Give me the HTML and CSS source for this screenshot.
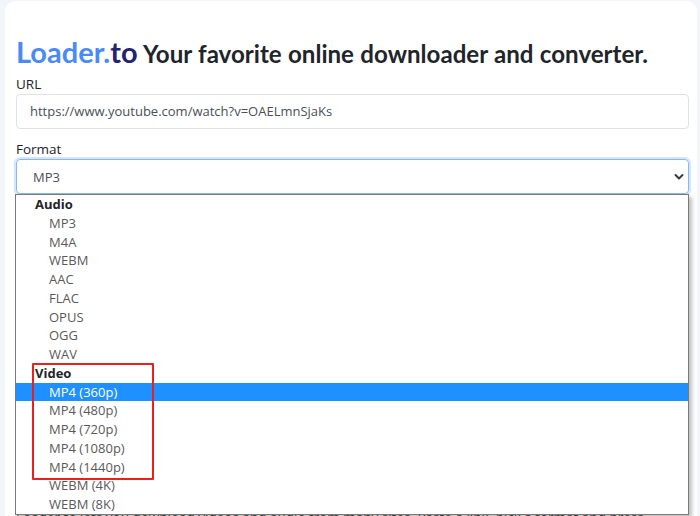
FILE: index.html
```html
<!DOCTYPE html>
<html lang="en">
<head>
    <meta charset="UTF-8">
    <meta name="viewport" content="width=device-width, initial-scale=1.0">
    <title>Loader.to - Online downloader and converter</title>
    <link rel="stylesheet" href="styles.css">
</head>
<body>
    <main class="card">
        <h1 class="title"><span class="brand">Loader.</span><span class="brand-to">to</span> Your favorite online downloader and converter.</h1>

        <label class="field-label">URL</label>
        <div class="text-input">https://www.youtube.com/watch?v=OAELmnSjaKs</div>

        <label class="field-label">Format</label>
        <div class="select-wrap">
            <div class="select focused">
                <span>MP3</span>
                <svg class="chevron" width="10" height="10" viewBox="0 0 10 10"><path d="M1.5 3 L5 6.5 L8.5 3" fill="none" stroke="#343a40" stroke-width="2" stroke-linecap="round" stroke-linejoin="round"/></svg>
            </div>
            <!-- open option list -->
            <ul class="options">
                <li class="group">Audio</li>
                <li>MP3</li>
                <li>M4A</li>
                <li>WEBM</li>
                <li>AAC</li>
                <li>FLAC</li>
                <li>OPUS</li>
                <li>OGG</li>
                <li>WAV</li>
                <li class="group">Video</li>
                <li class="active">MP4 (360p)</li>
                <li>MP4 (480p)</li>
                <li>MP4 (720p)</li>
                <li>MP4 (1080p)</li>
                <li>MP4 (1440p)</li>
                <li>WEBM (4K)</li>
                <li>WEBM (8K)</li>
            </ul>
            <div class="highlight-box"></div>
        </div>

        <p class="hint">Loader.to lets you download videos and audio from many sites. Paste a link, pick a format and press Download to start the conversion.</p>
    </main>
</body>
</html>
```

FILE: styles.css
```css
body {
    margin: 0;
    padding: 1px 3px 0 5px;
    background: #f2f5f9;
    font-family: "Open Sans", "Noto Sans", sans-serif;
    color: #212529;
    overflow: hidden;
    height: 516px;
}
.card {
    background: #fff;
    border-radius: 10px;
    padding: 34px 8px 40px 11px;
    min-height: 600px;
}
.title {
    margin: 0 0 4px;
    font-family: Lato, "Open Sans", sans-serif;
    font-size: 24.1px;
    line-height: 34px;
    font-weight: 700;
    color: #212529;
    word-spacing: 0.5px;
}
.brand { color: #4a8af4; font-size: 29px; }
.brand-to { color: #24246e; font-size: 29px; }

.field-label {
    display: block;
    font-size: 13.5px;
    line-height: 18px;
    margin-bottom: 1px;
}
.text-input {
    height: 33px;
    border: 1px solid #dee2e6;
    border-radius: 4px;
    padding: 0 13px;
    font-size: 13px;
    line-height: 33px;
    color: #495057;
    margin-bottom: 11px;
}

.select-wrap { position: relative; }
.select {
    height: 33px;
    border: 1px solid #86b7fe;
    border-radius: 4px;
    padding: 0 4px 0 16px;
    display: flex;
    align-items: center;
    justify-content: space-between;
    font-size: 13px;
    color: #495057;
}
.select.focused { box-shadow: 0 0 0 2px rgba(13, 110, 253, 0.18); }

.options {
    position: absolute;
    top: 35px;
    left: -1px;
    right: 0;
    margin: 0;
    padding: 0;
    list-style: none;
    background: #fff;
    border: 1px solid #7a7a7a;
    box-shadow: 3px 3px 4px rgba(0, 0, 0, 0.25);
    font-size: 13px;
    z-index: 2;
}
.options li {
    height: 18.75px;
    line-height: 18.75px;
    padding-left: 33px;
    color: #5a5a5a;
}
.options li.group {
    padding-left: 19px;
    font-weight: 700;
    color: #212529;
}
.options li.active {
    background: #1e90ff;
    color: #fff;
}

/* red annotation frame over the video group */
.highlight-box {
    position: absolute;
    top: 204px;
    left: 16px;
    width: 118px;
    height: 113px;
    border: 2px solid #e8211f;
    border-radius: 1px;
    z-index: 3;
}

.hint {
    margin: 313px 0 0;
    font-size: 13.5px;
    line-height: 20px;
    color: #444;
}
```
